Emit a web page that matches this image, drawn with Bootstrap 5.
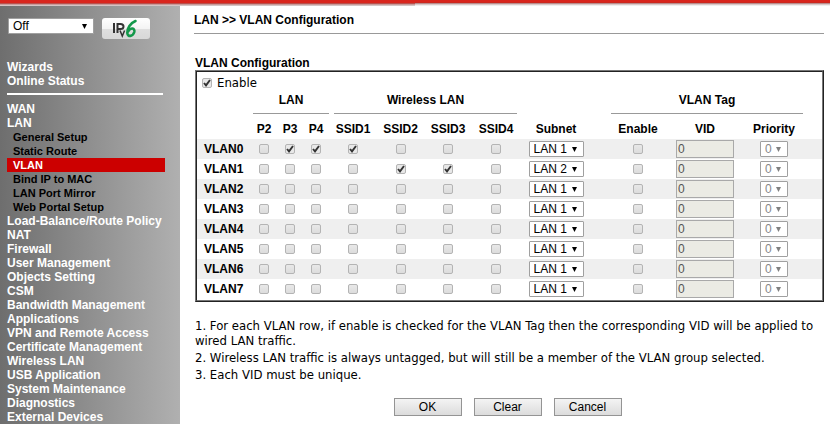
<!DOCTYPE html>
<html lang="en">
<head>
<meta charset="utf-8">
<meta name="viewport" content="width=device-width, initial-scale=1">
<title>VLAN Configuration</title>
<link href="https://cdn.jsdelivr.net/npm/bootstrap@5.3.0/dist/css/bootstrap.min.css" rel="stylesheet">
<style>
body { font: 12px/14px "Liberation Sans", Arial, sans-serif; color: #000; background: #fff; }
.topbar { height: 6px; background: linear-gradient(#d9251d 0 2px, #cc281f 2px 3px, #b98f8f 3px 4px, #dcc8c8 4px 5px, #eee 5px 6px); }
.topbar > div { width: 50%; height: 6px; background: linear-gradient(#d9251d 0 3px, #b9514d 3px 4px, #c99a9a 4px 5px, #d4c4c4 5px 6px); }
.side { flex: 0 0 180px; padding: 12px 15px 0 7px; background: linear-gradient(90deg, #6e6e6e, #b0b0b0); }
.side a { display: block; color: #fff; font-weight: bold; text-decoration: none; white-space: nowrap; }
.side .sub a { color: #000; font-size: 11px; padding-left: 6px; }
.side .sub a.current { background: #c00; color: #fff; }
.side hr { margin: 5px 2px 7px 0; border-top: 2px solid #fff; opacity: 1; }
.tools { gap: 8px; padding-left: 1px; margin-bottom: 21px; }
.main-area { padding: 7px 6px 0 14px; }
.title-line { font-size: 12px; line-height: 14px; font-weight: bold; margin: 0; }
.rule { border-top: 1px solid #999; opacity: 1; margin: 6px 0 22px; }
.section { padding-left: 1px; }
.panel { border: 2px ridge #777; padding: 3px 0 1px; }
.switch-row { padding-left: 5px; gap: 5px; }
.copy { font-family: "DejaVu Sans Condensed", "DejaVu Sans", sans-serif; font-size: 13px; line-height: 16px; }
.notes { line-height: 15px; gap: 2px; margin-top: 16px; }
.grid { table-layout: fixed; width: 100%; border-collapse: collapse; }
.grid th, .grid td { padding: 0; text-align: center; vertical-align: middle; white-space: nowrap; }
.grid .rowname { text-align: left; padding-left: 7px; }
.grid tbody tr { height: 20px; }
.grid tbody tr:nth-child(odd) { background: #efefef; }
.grid .group th { height: 27px; vertical-align: top; padding: 2px 0 0 2px; }
.grid .group th.wifi { padding: 2px 3px 0 5px; }
.grid .group th.tag { padding: 2px 5px 0; }
.grid .group span { display: block; height: 21px; border-bottom: 1px solid #999; }
.grid .names th { height: 21px; }
.tick { appearance: none; width: 10px; height: 10px; margin: 0; border: 1px solid #b4b4b4; border-radius: 2px; background: linear-gradient(#e8e8e8, #dcdcdc); display: block; }
.grid .tick { margin: 0 auto; }
.tick:checked { background: url("data:image/svg+xml,%3Csvg xmlns='http://www.w3.org/2000/svg' viewBox='0 0 8 8'%3E%3Cpath d='M1 4L3 6.4 7 1' fill='none' stroke='%23333' stroke-width='1.9'/%3E%3C/svg%3E") #e8e8e8; }
.drop { appearance: none; height: 16px; border: 1px solid #a0a0a0; border-radius: 1px; padding: 0 0 0 4px; font-size: 12px; line-height: 14px; color: #000; display: block; margin: 0 auto; background: url("data:image/svg+xml,%3Csvg xmlns='http://www.w3.org/2000/svg' width='5' height='5'%3E%3Cpath d='M0 0h5L2.5 5z'/%3E%3C/svg%3E") no-repeat right 6px center #fff; }
.drop.net { width: 55px; }
.drop.pri { width: 28px; }
.drop:disabled { color: #888; opacity: 1; background-image: url("data:image/svg+xml,%3Csvg xmlns='http://www.w3.org/2000/svg' width='5' height='5'%3E%3Cpath d='M0 0h5L2.5 5z' fill='%23808080'/%3E%3C/svg%3E"); }
.drop.state { width: 86px; margin: 0; }
.vid { width: 58px; height: 18px; padding: 0 0 0 1px; border: 1px solid #a9a9a9; background: #ebebe4; color: #555; font-size: 12px; line-height: 14px; display: block; margin: 0 auto; }
.push { width: 68px; height: 18px; padding: 0; border: 1px solid #949494; background: linear-gradient(#f4f4f4, #dcdcdc); font-size: 12px; line-height: 15px; color: #000; }
.actions { gap: 12px; }
.v6 { width: 48px; height: 21px; padding: 0; border: 0; background: none; }
.v6 svg { display: block; }
</style>
<script src="https://cdn.jsdelivr.net/npm/bootstrap@5.3.0/dist/js/bootstrap.bundle.min.js"></script>
</head>
<body class="d-flex flex-column min-vh-100 overflow-hidden">
<header class="topbar"><div></div></header>
<div class="d-flex flex-grow-1">
  <nav class="side" aria-label="Main menu">
    <div class="d-flex tools">
      <select class="drop state" aria-label="Auto logout"><option>Off</option></select>
      <button class="v6" type="button" aria-label="IPv6">
        <svg width="48" height="21" viewBox="0 0 48 21">
          <defs><linearGradient id="shine" x2="0" y2="1"><stop offset="0" stop-color="#fff"/><stop offset=".5" stop-color="#f4f4f4"/><stop offset=".55" stop-color="#dedede"/><stop offset="1" stop-color="#d8d8d8"/></linearGradient></defs>
          <rect width="48" height="21" rx="3" fill="url(#shine)"/>
          <path d="M12 5V15M15.500 15V6H18.500Q21.500 6 21.500 8.500T18.500 11H15.500" fill="none" stroke="#333" stroke-width="2"/>
          <path d="M18 12.500L20.300 18 22.600 12.500" fill="none" stroke="#333" stroke-width="1.500"/>
          <path d="M33.500 3C28.500 5 25 10.500 25.300 15C25.700 19.500 31 18.500 32.300 14C33 10 29 9 26 13.500" fill="none" stroke="#13984a" stroke-width="2.600" stroke-linecap="round"/>
        </svg>
      </button>
    </div>
    <a href="#">Wizards</a>
    <a href="#">Online Status</a>
    <hr>
    <a href="#">WAN</a>
    <a href="#">LAN</a>
    <div class="sub">
      <a href="#">General Setup</a>
      <a href="#">Static Route</a>
      <a href="#" class="current" aria-current="page">VLAN</a>
      <a href="#">Bind IP to MAC</a>
      <a href="#">LAN Port Mirror</a>
      <a href="#">Web Portal Setup</a>
    </div>
    <a href="#">Load-Balance/Route Policy</a>
    <a href="#">NAT</a>
    <a href="#">Firewall</a>
    <a href="#">User Management</a>
    <a href="#">Objects Setting</a>
    <a href="#">CSM</a>
    <a href="#">Bandwidth Management</a>
    <a href="#">Applications</a>
    <a href="#">VPN and Remote Access</a>
    <a href="#">Certificate Management</a>
    <a href="#">Wireless LAN</a>
    <a href="#">USB Application</a>
    <a href="#">System Maintenance</a>
    <a href="#">Diagnostics</a>
    <a href="#">External Devices</a>
  </nav>
  <main class="main-area flex-grow-1">
    <h1 class="title-line">LAN &gt;&gt; VLAN Configuration</h1>
    <hr class="rule">
    <form class="section">
      <h2 class="title-line">VLAN Configuration</h2>
      <div class="panel">
        <div class="d-flex align-items-center copy switch-row">
          <input class="tick" type="checkbox" id="enable" checked><label for="enable">Enable</label>
        </div>
        <table class="grid">
          <colgroup><col style="width:54px"><col style="width:26px"><col style="width:26px"><col style="width:26px"><col style="width:48px"><col style="width:47px"><col style="width:48px"><col style="width:48px"><col style="width:72px"><col style="width:14px"><col style="width:64px"><col style="width:70px"><col style="width:68px"><col style="width:14px"></colgroup>
          <thead>
            <tr class="group"><th></th><th colspan="3"><span>LAN</span></th><th colspan="4" class="wifi"><span>Wireless LAN</span></th><th></th><th></th><th colspan="3" class="tag"><span>VLAN Tag</span></th><th></th></tr>
            <tr class="names"><th></th><th>P2</th><th>P3</th><th>P4</th><th>SSID1</th><th>SSID2</th><th>SSID3</th><th>SSID4</th><th>Subnet</th><th></th><th>Enable</th><th>VID</th><th>Priority</th><th></th></tr>
          </thead>
          <tbody id="vlans"></tbody>
        </table>
      </div>
      <div class="copy notes d-flex flex-column">
        <div>1. For each VLAN row, if enable is checked for the VLAN Tag then the corresponding VID will be applied to wired LAN traffic.</div>
        <div>2. Wireless LAN traffic is always untagged, but will still be a member of the VLAN group selected.</div>
        <div>3. Each VID must be unique.</div>
      </div>
      <div class="d-flex justify-content-center mt-3 me-1 actions">
        <button class="push" type="button">OK</button>
        <button class="push" type="reset">Clear</button>
        <button class="push" type="button">Cancel</button>
      </div>
    </form>
  </main>
</div>
<script>
const ports = ["P2", "P3", "P4", "SSID1", "SSID2", "SSID3", "SSID4"];
const members = [["P3", "P4", "SSID1"], ["SSID2", "SSID3"], [], [], [], [], [], []];
document.getElementById("vlans").innerHTML = members.map((on, i) => `<tr><th class="rowname" scope="row">VLAN${i}</th>` +
  ports.map(p => `<td><input class="tick" type="checkbox" aria-label="VLAN${i} ${p}"${on.includes(p) ? " checked" : ""}></td>`).join("") +
  `<td><select class="drop net" aria-label="VLAN${i} subnet"><option>LAN 1</option><option${i === 1 ? " selected" : ""}>LAN 2</option></select></td><td></td>` +
  `<td><input class="tick" type="checkbox" aria-label="VLAN${i} tag"></td>` +
  `<td><input class="vid" type="text" value="0" disabled aria-label="VLAN${i} VID"></td>` +
  `<td><select class="drop pri" disabled aria-label="VLAN${i} priority"><option>0</option></select></td><td></td></tr>`).join("");
</script>
</body>
</html>
